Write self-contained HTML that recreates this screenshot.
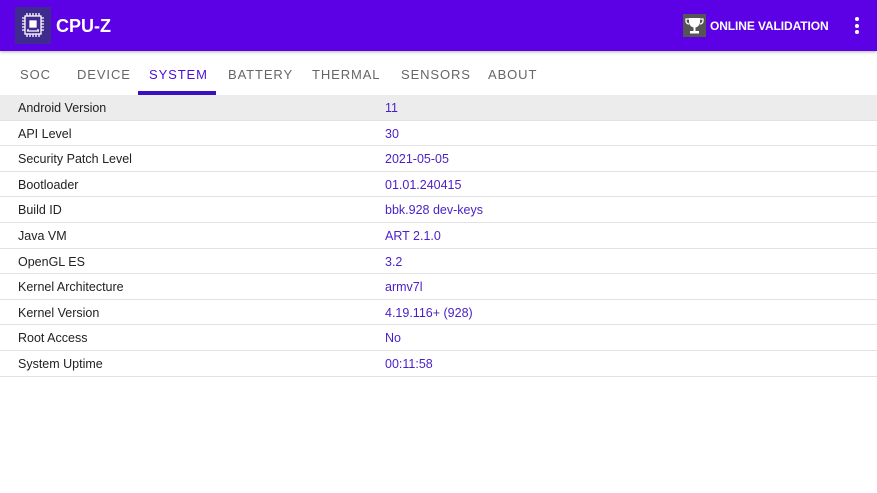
<!DOCTYPE html>
<html><head><meta charset="utf-8"><style>
*{margin:0;padding:0;box-sizing:border-box}
body{width:877px;height:493px;background:#fff;font-family:"Liberation Sans",Roboto,sans-serif;position:relative;overflow:hidden}
.hdr{position:absolute;left:0;top:0;width:877px;height:51px;background:#5c00e6;box-shadow:0 1px 3px rgba(0,0,0,.3)}
.logo{position:absolute;left:15px;top:7px;width:36px;height:37px;background:#3f2b8f}
.title{position:absolute;left:56px;top:16px;color:#fff;font-size:18px;font-weight:bold}
.trophy{position:absolute;left:683px;top:14px;width:23px;height:23px;background:#555}
.ov{position:absolute;left:710px;top:19px;color:#fff;font-size:12px;font-weight:bold;letter-spacing:-0.1px}
.dots{position:absolute;left:855px;top:17px}
.dots i{display:block;width:4px;height:4px;border-radius:2px;background:#fff;margin-bottom:2.5px}
.tabs{position:absolute;top:51px;left:0;width:877px;height:44px}
.tab{position:absolute;top:16px;font-size:13px;letter-spacing:0.9px;color:#666}
.ind{position:absolute;left:138px;top:91px;width:78px;height:4px;background:#3a10c0}
.row{position:absolute;left:0;width:877px;height:25.6px;border-bottom:1px solid #e2e2e2;font-size:12.5px;color:#222}
.row span{position:absolute;top:6px}
.row .k{left:18px}
.row .v{left:385px;color:#4a1ec8}
</style></head><body>
<div class="hdr">
<div class="logo"><svg width="36" height="37" viewBox="0 0 36 37"><g fill="none" stroke="#fff" stroke-width="1.3"><rect x="10" y="9" width="16" height="18"/><rect x="15" y="14" width="6" height="6" fill="#fff"/><path d="M12 24h12M13 22v2M23 22v2"/><path d="M7 11h3M7 14h3M7 17h3M7 20h3M7 23h3M26 11h3M26 14h3M26 17h3M26 20h3M26 23h3M12 6v3M15 6v3M18 6v3M21 6v3M24 6v3M12 27v3M15 27v3M18 27v3M21 27v3M24 27v3"/></g></svg></div>
<div class="title">CPU-Z</div>
<div class="trophy"><svg width="23" height="23" viewBox="0 0 23 23"><path d="M6 4h11v4a5.5 5.5 0 0 1-11 0z" fill="#fff"/><path d="M6 5H3v2a3 3 0 0 0 3 3M17 5h3v2a3 3 0 0 1-3 3" fill="none" stroke="#fff" stroke-width="1.3"/><rect x="10.5" y="13" width="2" height="4" fill="#fff"/><rect x="7" y="17" width="9" height="2.5" fill="#fff"/></svg></div>
<div class="ov">ONLINE VALIDATION</div>
<div class="dots"><i></i><i></i><i></i></div>
</div>
<div class="tabs">
<span class="tab" style="left:20px">SOC</span>
<span class="tab" style="left:77px">DEVICE</span>
<span class="tab" style="left:149px;color:#4a10d8">SYSTEM</span>
<span class="tab" style="left:228px">BATTERY</span>
<span class="tab" style="left:312px">THERMAL</span>
<span class="tab" style="left:401px">SENSORS</span>
<span class="tab" style="left:488px">ABOUT</span>
</div>
<div class="ind"></div>
<div class="row" style="top:95px;background:#ececec"><span class="k">Android Version</span><span class="v">11</span></div>
<div class="row" style="top:120.6px"><span class="k">API Level</span><span class="v">30</span></div>
<div class="row" style="top:146.2px"><span class="k">Security Patch Level</span><span class="v">2021-05-05</span></div>
<div class="row" style="top:171.8px"><span class="k">Bootloader</span><span class="v">01.01.240415</span></div>
<div class="row" style="top:197.4px"><span class="k">Build ID</span><span class="v">bbk.928 dev-keys</span></div>
<div class="row" style="top:223px"><span class="k">Java VM</span><span class="v">ART 2.1.0</span></div>
<div class="row" style="top:248.6px"><span class="k">OpenGL ES</span><span class="v">3.2</span></div>
<div class="row" style="top:274.2px"><span class="k">Kernel Architecture</span><span class="v">armv7l</span></div>
<div class="row" style="top:299.8px"><span class="k">Kernel Version</span><span class="v">4.19.116+ (928)</span></div>
<div class="row" style="top:325.4px"><span class="k">Root Access</span><span class="v">No</span></div>
<div class="row" style="top:351px"><span class="k">System Uptime</span><span class="v">00:11:58</span></div>
</body></html>
